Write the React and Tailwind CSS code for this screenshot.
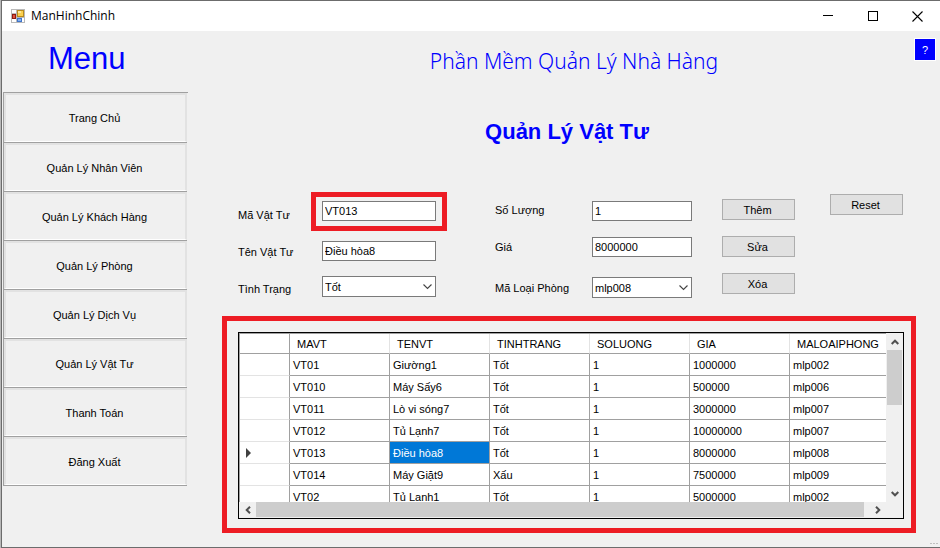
const MENU = [
  'Trang Chủ',
  'Quản Lý Nhân Viên',
  'Quản Lý Khách Hàng',
  'Quản Lý Phòng',
  'Quản Lý Dịch Vụ',
  'Quản Lý Vật Tư',
  'Thanh Toán',
  'Đăng Xuất',
];

const COLUMNS = ['MAVT', 'TENVT', 'TINHTRANG', 'SOLUONG', 'GIA', 'MALOAIPHONG'];

const ROWS = [
  ['VT01', 'Giường1', 'Tốt', '1', '1000000', 'mlp002'],
  ['VT010', 'Máy Sấy6', 'Tốt', '1', '500000', 'mlp006'],
  ['VT011', 'Lò vi sóng7', 'Tốt', '1', '3000000', 'mlp007'],
  ['VT012', 'Tủ Lạnh7', 'Tốt', '1', '10000000', 'mlp007'],
  ['VT013', 'Điều hòa8', 'Tốt', '1', '8000000', 'mlp008'],
  ['VT014', 'Máy Giặt9', 'Xấu', '1', '7500000', 'mlp009'],
  ['VT02', 'Tủ Lạnh1', 'Tốt', '1', '5000000', 'mlp002'],
];

const SELECTED = 4;

function AppIcon() {
  return (
    <svg width="14" height="14" viewBox="0 0 14 14" shapeRendering="crispEdges" aria-hidden="true">
      <rect width="14" height="14" fill="#b9b9b9" />
      <rect x="1" y="1" width="4" height="3" fill="#fff" />
      <rect x="1" y="10" width="4" height="3" fill="#fff" />
      <rect x="11" y="9" width="2" height="4" fill="#fff" />
      <rect x="1" y="5" width="4" height="5" fill="#8e1a12" />
      <rect x="2" y="6" width="2" height="3" fill="#e0543f" />
      <rect x="6" y="1" width="7" height="7" fill="#b98a1c" />
      <rect x="7" y="2" width="5" height="5" fill="#fbd04e" />
      <rect x="7" y="2" width="3" height="2" fill="#fde79a" />
      <rect x="6" y="9" width="5" height="4" fill="#3f74c9" />
      <rect x="7" y="10" width="3" height="2" fill="#84b0f2" />
    </svg>
  );
}

function Arrow({ d }) {
  return (
    <svg width="8" height="8" viewBox="0 0 8 8" fill="none" stroke="#505050" strokeWidth="2" aria-hidden="true">
      <path d={d} />
    </svg>
  );
}

function TitleBar() {
  return (
    <header className="flex h-[30px] items-center bg-white pl-[9px] text-black">
      <AppIcon />
      <h1 className="ml-1.5 flex-1 font-['Open_Sans','Noto_Sans',sans-serif] text-[12px] leading-4">ManHinhChinh</h1>
      <button type="button" aria-label="Minimize" className="flex h-full w-[45px] items-center justify-center">
        <svg width="10" height="10" viewBox="0 0 10 10" shapeRendering="crispEdges"><path d="M0 4.5H10" stroke="#000" /></svg>
      </button>
      <button type="button" aria-label="Maximize" className="flex h-full w-[45px] items-center justify-center">
        <svg width="10" height="10" viewBox="0 0 10 10" shapeRendering="crispEdges"><rect x="0.5" y="0.5" width="9" height="9" fill="none" stroke="#000" /></svg>
      </button>
      <button type="button" aria-label="Close" className="flex h-full w-[45px] items-center justify-center">
        <svg width="11" height="11" viewBox="0 0 11 11"><path d="M0.5 0.5L10.5 10.5M10.5 0.5L0.5 10.5" stroke="#000" strokeWidth="1.1" /></svg>
      </button>
    </header>
  );
}

function Sidebar() {
  return (
    <nav className="w-[186px] shrink-0 pl-px">
      <h2 className="h-[61px] pt-2.5 pl-[45px] text-[31px] leading-9 text-[#0000ff]">Menu</h2>
      <ul className="border-t border-l border-[#a0a0a0]">
        {MENU.map((item) => (
          <li key={item} className="mr-px h-[49px] border-b border-[#a0a0a0] first:h-[50px]">
            <button type="button" className="size-full border-2 border-b-[1px] border-[#e2e2e2] border-b-white pr-0.5 text-center">
              {item}
            </button>
          </li>
        ))}
      </ul>
    </nav>
  );
}

const field = 'h-5 w-full border border-[#7a7a7a] bg-white px-0.5 outline-none';

function Select({ id, value, options }) {
  return (
    <div className="relative h-[21px]">
      <select id={id} defaultValue={value} className="h-[21px] w-full appearance-none border border-[#7a7a7a] bg-white px-0.5 outline-none">
        {options.map((o) => (
          <option key={o}>{o}</option>
        ))}
      </select>
      <svg className="pointer-events-none absolute top-2 right-1" width="9" height="6" viewBox="0 0 9 6" fill="none" stroke="#444" strokeWidth="1.1" aria-hidden="true">
        <path d="M0.5 0.5L4.5 4.5L8.5 0.5" />
      </svg>
    </div>
  );
}

function Action({ children }) {
  return (
    <button type="button" className="h-[21px] w-[73px] border border-[#adadad] bg-[#e1e1e1] pr-0.5 leading-4">
      {children}
    </button>
  );
}

function Form() {
  return (
    <form className="flex items-start pt-[49px] pl-[50px] leading-5">
      <div className="mt-3 grid w-[84px] shrink-0 grid-rows-[37px_37px_20px]">
        <label htmlFor="ma">Mã Vật Tư</label>
        <label htmlFor="ten">Tên Vật Tư</label>
        <label htmlFor="tinhtrang">Tình Trạng</label>
      </div>
      <div className="mt-2 grid w-[114px] shrink-0 grid-rows-[40px_35px_21px]">
        <div className="relative h-5">
          <input id="ma" defaultValue="VT013" className={field} />
          <div className="pointer-events-none absolute -inset-x-[11px] -top-[9px] -bottom-2.5 border-5 border-[#ed1c24]" />
        </div>
        <input id="ten" defaultValue="Điều hòa8" className={field} />
        <Select id="tinhtrang" value="Tốt" options={['Tốt', 'Xấu']} />
      </div>
      <div className="mt-[7px] ml-[59px] grid w-[97px] shrink-0 grid-rows-[37px_41px_20px]">
        <label htmlFor="soluong">Số Lượng</label>
        <label htmlFor="gia">Giá</label>
        <label htmlFor="loai">Mã Loại Phòng</label>
      </div>
      <div className="mt-2 grid w-[100px] shrink-0 grid-rows-[36px_40px_21px]">
        <input id="soluong" defaultValue="1" className={field} />
        <input id="gia" defaultValue="8000000" className={field} />
        <Select id="loai" value="mlp008" options={['mlp002', 'mlp006', 'mlp007', 'mlp008', 'mlp009']} />
      </div>
      <div className="mt-1.5 ml-[30px] flex flex-col gap-4">
        <Action>Thêm</Action>
        <Action>Sửa</Action>
        <Action>Xóa</Action>
      </div>
      <div className="mt-px ml-[35px] flex">
        <Action>Reset</Action>
      </div>
    </form>
  );
}

function DataGrid() {
  return (
    <section className="mt-[17px] mr-6 ml-[34px] border-5 border-[#ed1c24] pt-[11px] pr-[7px] pb-[9px] pl-[11px]">
      <div className="border border-black bg-[#f0f0f0]">
        <div className="flex h-[169px]">
          <div className="min-w-0 flex-1 overflow-hidden border-t border-l border-[#a0a0a0] bg-white">
            <table className="w-[650px] table-fixed border-separate border-spacing-0">
              <colgroup>
                <col className="w-[50px]" />
                {COLUMNS.map((c) => (
                  <col key={c} className="w-[100px]" />
                ))}
              </colgroup>
              <thead>
                <tr className="h-5">
                  <th className="border-r border-b border-[#a0a0a0] p-0" />
                  {COLUMNS.map((c) => (
                    <th key={c} scope="col" className="border-r border-b border-r-[#e3e3e3] border-b-[#a0a0a0] p-0 pl-[7px] text-left leading-[18px] font-normal">
                      {c}
                    </th>
                  ))}
                </tr>
              </thead>
              <tbody>
                {ROWS.map((row, r) => (
                  <tr key={row[0]} className="h-[22px]">
                    <th scope="row" className="border-r border-b border-r-[#a0a0a0] border-b-[#e3e3e3] p-0">
                      {r === SELECTED && (
                        <svg className="ml-1.5" width="5" height="10" viewBox="0 0 5 10" aria-label="Current row"><path d="M0 0L5 5L0 10Z" fill="#404040" /></svg>
                      )}
                    </th>
                    {row.map((cell, c) => (
                      <td
                        key={c}
                        className={
                          r === SELECTED && c === 1
                            ? 'border-r border-b border-[#a0a0a0] bg-[#0078d7] p-0 pl-[3px] leading-5 text-white'
                            : 'border-r border-b border-[#a0a0a0] p-0 pl-[3px] leading-5'
                        }
                      >
                        {cell}
                      </td>
                    ))}
                  </tr>
                ))}
              </tbody>
            </table>
          </div>
          <div className="ml-px flex w-4 shrink-0 flex-col items-center pr-px">
            <div className="flex h-[17px] items-center"><Arrow d="M0.7 6L4 2.7L7.3 6" /></div>
            <div className="h-[55px] w-full bg-[#cdcdcd]" />
            <div className="mt-auto flex h-[17px] items-center"><Arrow d="M0.7 2L4 5.3L7.3 2" /></div>
          </div>
        </div>
        <div className="flex h-4 items-center pr-[17px] pb-px">
          <div className="flex w-[17px] justify-center"><Arrow d="M6 0.7L2.7 4L6 7.3" /></div>
          <div className="h-full flex-1 bg-[#cdcdcd]" />
          <div className="flex w-[22px] justify-center pl-1.5"><Arrow d="M2 0.7L5.3 4L2 7.3" /></div>
        </div>
      </div>
    </section>
  );
}

export default function App() {
  return (
    <div className="flex min-h-screen bg-[#b8b8b8] pl-px font-['Liberation_Sans',Arial,sans-serif] text-[11px] leading-4 text-black">
      <div className="relative flex min-w-0 flex-1 flex-col border-y border-l border-[#6c6c6c] bg-[#f0f0f0]">
        <TitleBar />
        <div className="flex">
          <Sidebar />
          <main className="min-w-0 flex-1">
            <div className="flex items-start pt-2 pr-[5px] pl-[45px]">
              <h2 className="mt-2 flex-1 text-center font-['Noto_Sans','Open_Sans',sans-serif] text-[21px] leading-7 font-light text-[#0000ff]">
                Phần Mềm Quản Lý Nhà Hàng
              </h2>
              <button type="button" aria-label="Help" className="h-[21px] w-5 bg-[#0000ff] text-white outline outline-white">?</button>
            </div>
            <h3 className="mt-[45px] pl-1.5 text-center text-[22px] leading-6 font-bold text-[#0000ff]">Quản Lý Vật Tư</h3>
            <Form />
            <DataGrid />
          </main>
        </div>
        <div className="absolute right-0.5 bottom-[3px] flex gap-px" aria-hidden="true">
          <span className="h-px w-0.5 bg-[#bfbfbf]" />
          <span className="h-px w-0.5 bg-[#bfbfbf]" />
          <span className="h-px w-0.5 bg-[#bfbfbf]" />
        </div>
      </div>
    </div>
  );
}
